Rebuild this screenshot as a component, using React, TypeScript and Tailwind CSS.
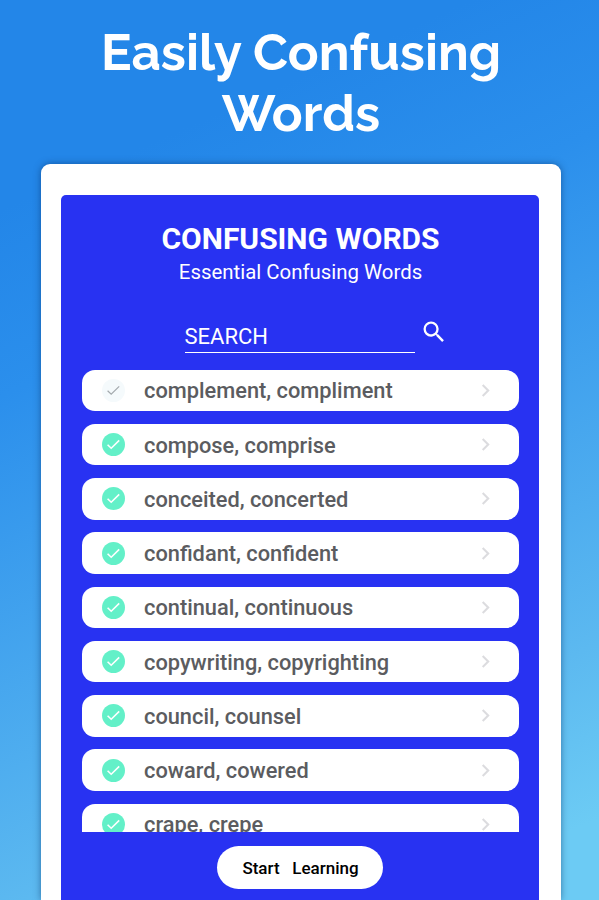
import { MdChevronRight, MdSearch } from "react-icons/md";

const words = [
    { title: "complement, compliment", done: false },
    { title: "compose, comprise", done: true },
    { title: "conceited, concerted", done: true },
    { title: "confidant, confident", done: true },
    { title: "continual, continuous", done: true },
    { title: "copywriting, copyrighting", done: true },
    { title: "council, counsel", done: true },
    { title: "coward, cowered", done: true },
    { title: "crape, crepe", done: true },
];

type RowProps = {
    title: string
    done: boolean
}

function WordRow({ title, done }: RowProps) {
    return (
        <li className="flex h-[41.5px] shrink-0 items-center rounded-[13px] bg-white pr-[21px] pl-[20px]">
            <span className={`flex h-[23px] w-[23px] items-center justify-center rounded-full ${done ? "bg-[#63f0c8] text-white" : "bg-[#f5fafc] text-[#a3a9ad]"}`}>
                <svg viewBox="0 0 23 23" className="h-full w-full" fill="none" stroke="currentColor" strokeWidth={done ? 1.6 : 1.2}>
                    <path d="M5.6 11.7 9.2 15.2 17.2 7.4" />
                </svg>
            </span>
            <span className="ml-[19.5px] flex-1 pt-[2px] text-[21.8px] leading-[28px] font-medium whitespace-nowrap text-[#5b5c60]">{title}</span>
            <MdChevronRight className="h-[25px] w-[25px] text-[#dcdcdf]" />
        </li>
    )
}

export default function App() {
    return (
        <main className="flex h-[900px] w-[599px] flex-col items-center overflow-hidden bg-linear-[156deg,#2386e8_0%,#2386e8_18%,#2b8fec_34%,#5cb9f0_78%,#6ccbf4_93%] font-['Roboto',sans-serif]">
            <h1 className="h-[163.5px] pt-[22px] pl-[3px] text-center font-['Raleway','Lato',sans-serif] text-[51px] leading-[61px] font-bold text-white">
                Easily Confusing<br />Words
            </h1>
            <div className="ml-[2px] h-[736.5px] w-[520px] shrink-0 rounded-t-[9px] bg-white px-[20px] pt-[31px] shadow-[0_0_7px_rgba(0,40,90,0.5)]">
                <section className="flex h-full w-[478px] flex-col items-center rounded-t-[5px] bg-[#2832f2] pl-[1px] text-white">
                    <h2 className="mt-[26px] pl-px text-[30px] leading-[36px] font-bold">CONFUSING WORDS</h2>
                    <p className="pl-px text-[20.4px] leading-[30px]">Essential Confusing Words</p>
                    <div className="mt-[32.5px] ml-[32px] flex h-[40px] w-[263px]">
                        <div className="h-[34px] w-[230px] border-b border-white pt-[3.5px] text-[22px] leading-[28px]">SEARCH</div>
                        <MdSearch className="-mt-[1px] ml-[5px] h-[28px] w-[28px]" />
                    </div>
                    <ul className="mt-[10.5px] flex h-[462px] w-[437px] flex-col gap-[12.75px] overflow-hidden">
                        {words.map((w) => <WordRow key={w.title} {...w} />)}
                    </ul>
                    <button className="mt-[14px] h-[43px] w-[166px] rounded-full bg-white pt-[3px] pl-px text-[17px] font-medium whitespace-pre text-black">Start   Learning</button>
                </section>
            </div>
        </main>
    )
}
